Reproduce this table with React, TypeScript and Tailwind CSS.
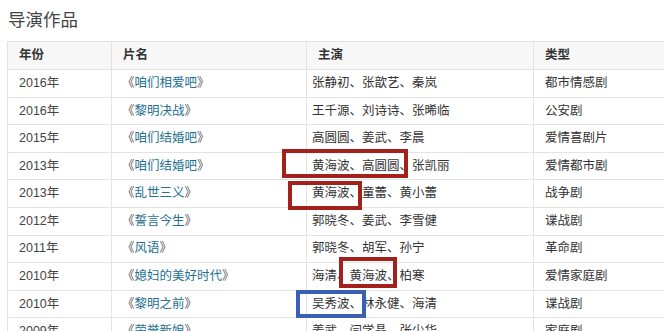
const rows = [
  ["2016年", "咱们相爱吧", "张静初、张歆艺、秦岚", "都市情感剧"],
  ["2016年", "黎明决战", "王千源、刘诗诗、张晞临", "公安剧"],
  ["2015年", "咱们结婚吧", "高圆圆、姜武、李晨", "爱情喜剧片"],
  ["2013年", "咱们结婚吧", "黄海波、高圆圆、张凯丽", "爱情都市剧"],
  ["2013年", "乱世三义", "黄海波、童蕾、黄小蕾", "战争剧"],
  ["2012年", "誓言今生", "郭晓冬、姜武、李雪健", "谍战剧"],
  ["2011年", "风语", "郭晓冬、胡军、孙宁", "革命剧"],
  ["2010年", "媳妇的美好时代", "海清、黄海波、柏寒", "爱情家庭剧"],
  ["2010年", "黎明之前", "吴秀波、林永健、海清", "谍战剧"],
  ["2009年", "荣誉新娘", "姜武、闫学晶、张少华", "家庭剧"],
]

const cols = "grid grid-cols-[104px_195px_227px_1fr]"

export default function App() {
  return (
    <div
      className="relative h-[331px] w-[664px] overflow-hidden bg-white text-[#333]"
      style={{ fontFamily: '"Liberation Sans", "Noto Sans CJK SC", sans-serif' }}
    >
      <h2 className="pl-[8px] pt-[7px] text-[17.5px] leading-[26px] font-normal text-[#444]">
        导演作品
      </h2>

      <div className="ml-[7px] mt-[8px] w-[720px] border-l border-t border-[#e3e3e3] text-[12.5px]">
        <div className={`${cols} h-[28px] border-b border-[#e3e3e3] bg-[#f7f7f7] font-bold`}>
          <div className="flex items-center border-r border-[#e3e3e3] pl-[11px]">年份</div>
          <div className="flex items-center border-r border-[#e3e3e3] pl-[11px]">片名</div>
          <div className="flex items-center border-r border-[#e3e3e3] pl-[11px]">主演</div>
          <div className="flex items-center pl-[11px]">类型</div>
        </div>
        {rows.map((r, i) => (
          <div key={i} className={`${cols} h-[27.6px] border-b border-[#e3e3e3]`}>
            <div className="flex items-center border-r border-[#e3e3e3] pl-[11px] text-[#444]">{r[0]}</div>
            <div className="flex items-center border-r border-[#e3e3e3] pl-[10px] text-[#555]">
              《<a className="text-[#24708e]">{r[1]}</a>》
            </div>
            <div className="flex items-center border-r border-[#e3e3e3] pl-[5px]">{r[2]}</div>
            <div className="flex items-center pl-[11px]">{r[3]}</div>
          </div>
        ))}
      </div>

      {/* annotation boxes */}
      <div className="absolute left-[282px] top-[149px] h-[29px] w-[126px] border-[4px] border-[#a3211d]" />
      <div className="absolute left-[288px] top-[181px] h-[29px] w-[74px] border-[4px] border-[#a3211d]" />
      <div className="absolute left-[339px] top-[257px] h-[31px] w-[58px] border-[4px] border-[#a3211d]" />
      <div className="absolute left-[296px] top-[290px] h-[28px] w-[70px] border-[4px] border-[#3b5fb5]" />
    </div>
  )
}
